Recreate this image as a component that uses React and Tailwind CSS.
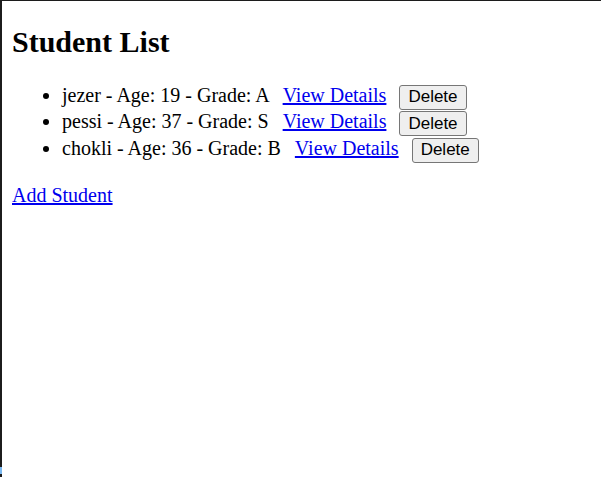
import React from "react";

const students = [
  { name: "jezer", age: 19, grade: "A" },
  { name: "pessi", age: 37, grade: "S" },
  { name: "chokli", age: 36, grade: "B" },
];

const App = () => {
  return (
    <div className="relative min-h-[477px] border-t border-l-2 border-[#1c1c1c] bg-white text-black font-['Liberation_Serif',serif] text-[20px]">
      {/* stray blue pixels on the left edge */}
      <div className="absolute -left-[2px] top-[466px] w-[2px] h-[7px] bg-[#7ab8f0]" />

      <div className="px-[10px] pt-[24px] pb-[10px]">
        <h2 className="text-[30px] font-bold leading-[34px] mb-[23px]">Student List</h2>

        <ul className="list-disc pl-[50px] mb-[19px]">
          {students.map((s) => (
            <li key={s.name} className="leading-[26px] h-[26.3px]">
              {s.name} - Age: {s.age} - Grade: {s.grade}{" "}
              <a href="#" className="ml-[9px] text-[#0000ee] underline">
                View Details
              </a>{" "}
              <button className="ml-[8px] px-[8px] h-[25px] align-middle bg-[#efefef] border border-[#767676] rounded-[3px] font-['Liberation_Sans',Arial,sans-serif] text-[17px] leading-[20px] text-black">
                Delete
              </button>
            </li>
          ))}
        </ul>

        <a href="#" className="text-[#0000ee] underline leading-[23px]">
          Add Student
        </a>
      </div>
    </div>
  );
};

export default App;
